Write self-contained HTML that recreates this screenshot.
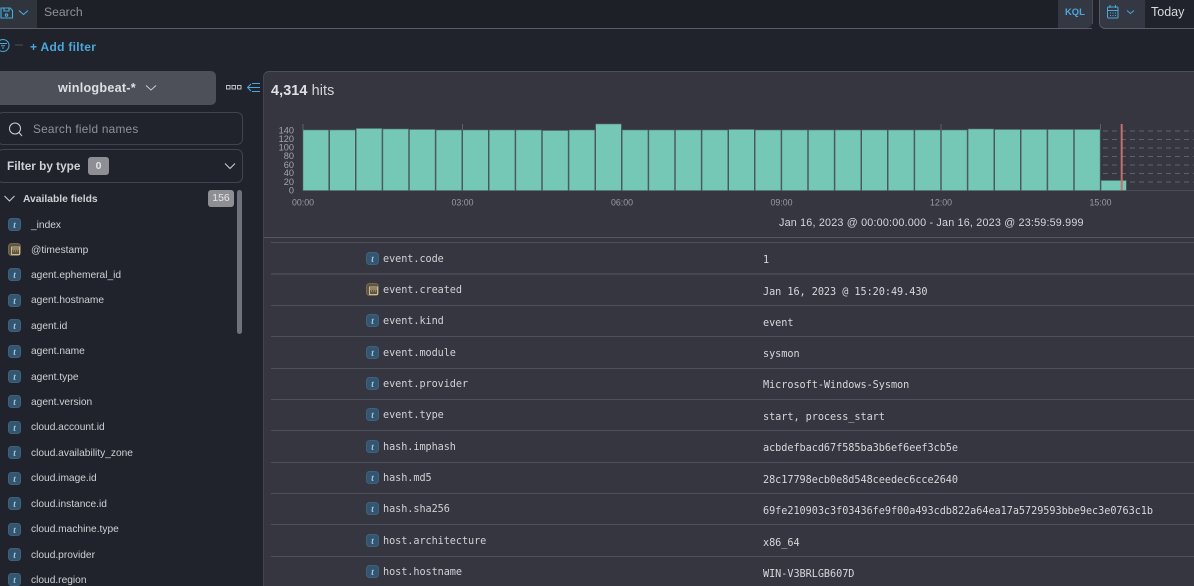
<!DOCTYPE html>
<html><head><meta charset="utf-8"><style>
html,body{margin:0;padding:0;width:1194px;height:586px;overflow:hidden;background:#20232b;font-family:"Liberation Sans",sans-serif;color:#d4d6da}
#w{position:absolute;left:0;top:0;width:1194px;height:586px;overflow:hidden;background:#20232b;filter:blur(.35px)}
.a{position:absolute;white-space:nowrap}
.ic{position:absolute;width:13px;height:13px;border-radius:3.500px;background:#335570;border:.5px solid #3f617c;box-sizing:border-box;color:#9ccbea;font:italic bold 9px/12px "Liberation Serif",serif;text-align:center}
.ic.d{background:#60553f;border-color:#75684e}
.ic.d svg{position:absolute;left:2px;top:2px}
.f{position:absolute;left:31px;margin-top:1px;font-size:10.200px;line-height:14px;color:#cfd1d6;white-space:nowrap}
.l{position:absolute;left:271px;right:0;height:1px;background:#4f505b}
.k{position:absolute;left:383px;margin-top:4px;font:10.2px/14px "DejaVu Sans Mono","Liberation Mono",monospace;letter-spacing:-.06px;color:#d0d2d6;white-space:nowrap}
.v{position:absolute;left:763px;margin-top:4px;font:10.2px/14px "DejaVu Sans Mono","Liberation Mono",monospace;letter-spacing:-.04px;color:#d6d8dc;white-space:nowrap}
</style></head><body><div id="w">
<!-- top bar -->
<div class="a" style="left:0;top:0;width:37px;height:28px;background:#2f343d"></div>
<div class="a" style="left:37px;top:0;width:1021px;height:28px;background:#1d2027"></div>
<div class="a" style="left:1058px;top:0;width:34px;height:28px;background:#343843;border-radius:0 0 5px 0"></div>
<div class="a" style="left:0;top:28px;width:1092px;height:1px;background:#5a5d65"></div>
<div class="a" style="left:1092px;top:0;width:1px;height:24px;background:#4a4d55"></div>
<div class="a" style="left:1099px;top:0;width:45px;height:28px;background:#343843;border-radius:0 0 0 6px;border-left:1px solid #55585f;border-bottom:1px solid #5a5d65;box-sizing:content-box"></div>
<div class="a" style="left:1145px;top:28px;width:49px;height:1px;background:#5a5d65"></div>
<svg class="a" style="left:0;top:0" width="32" height="22" viewBox="0 0 32 22" fill="none" stroke="#4aa8dc" stroke-width="1.1"><path d="M1 8h9l2.500 2.500V18H1zM4 8v3h5V8"/><circle cx="6.500" cy="15" r="1.200"/><path d="M19 10.500l4.500 4 4.500-4"/></svg>
<div class="a" style="left:44px;top:4px;font-size:12.200px;line-height:16px;color:#8f929a">Search</div>
<div class="a" style="left:1065px;top:5px;font-size:9.400px;line-height:13px;font-weight:bold;color:#4aa8dc">KQL</div>
<svg class="a" style="left:1106px;top:4px" width="34" height="16" viewBox="0 0 34 16" fill="none" stroke="#4aa8dc" stroke-width="1"><rect x="1.500" y="3" width="10.500" height="11" rx="1"/><path d="M1.500 6.500h10.500M4 1v3M9.500 1v3M4 9h1M6.500 9h1M9 9h1M4 11.500h1M6.500 11.500h1M9 11.500h1"/><path d="M21 6.500l3.500 3 3.500-3"/></svg>
<div class="a" style="left:1151px;top:4px;font-size:12.500px;line-height:16px;color:#d8dade">Today</div>
<!-- filter -->
<svg class="a" style="left:0;top:38px" width="26" height="16" viewBox="0 0 26 16" fill="none" stroke="#4aa8dc" stroke-width="1"><circle cx="3" cy="7.500" r="6"/><path d="M-1 5.500h8M1 7.700h4M2 10h2"/><path d="M15 7h8" stroke="#4d5058"/></svg>
<div class="a" style="left:30px;top:39px;font-size:12px;line-height:16px;font-weight:bold;color:#4aa8dc;letter-spacing:.3px">+ Add filter</div>
<!-- index pattern -->
<div class="a" style="left:0;top:71px;width:216px;height:34px;background:#4d5059;border-radius:0 5px 5px 0"></div>
<div class="a" style="left:58px;top:80px;font-size:12.600px;line-height:16px;font-weight:bold;color:#dfe0e3;letter-spacing:.25px">winlogbeat-*</div>
<svg class="a" style="left:144px;top:83px" width="14" height="10" viewBox="0 0 14 10" fill="none" stroke="#c9cbd0" stroke-width="1"><path d="M2 2.500l5 4.500 5-4.500"/></svg>
<svg class="a" style="left:225px;top:82px" width="36" height="12" viewBox="0 0 36 12" fill="none"><g stroke="#cfd1d6" stroke-width=".9"><rect x="1.500" y="3.500" width="3.500" height="3.500"/><rect x="7" y="3.500" width="3.500" height="3.500"/><rect x="12.500" y="3.500" width="3.500" height="3.500"/></g><path d="M26 2l-3.500 3.500 3.500 3.500M23 5.500h12M27 1.500h8M27 9.500h8" stroke="#4aa8dc" stroke-width="1"/></svg>
<!-- search -->
<div class="a" style="left:-3px;top:112px;width:246px;height:33px;box-sizing:border-box;border:1px solid #41444c;border-radius:6px"></div>
<svg class="a" style="left:7px;top:121px" width="18" height="17" viewBox="0 0 18 17" fill="none" stroke="#cfd1d6" stroke-width="1"><circle cx="8" cy="7.500" r="5.500"/><path d="M12 11.500l3 3.500"/></svg>
<div class="a" style="left:33px;top:122px;font-size:11.800px;line-height:15px;color:#8f929a;letter-spacing:.25px">Search field names</div>
<div class="a" style="left:-3px;top:149px;width:246px;height:34px;box-sizing:border-box;border:1px solid #41444c;border-radius:6px"></div>
<div class="a" style="left:7px;top:158px;font-size:11.800px;line-height:16px;font-weight:bold;color:#cfd1d6">Filter by type</div>
<div class="a" style="left:88px;top:157px;width:21px;height:18px;border-radius:3px;background:#8d8f94;color:#e3e4e6;font-size:10.500px;font-weight:bold;line-height:18px;text-align:center">0</div>
<svg class="a" style="left:222px;top:161px" width="16" height="11" viewBox="0 0 16 11" fill="none" stroke="#cfd1d6" stroke-width="1"><path d="M3 2.500l5 5 5-5"/></svg>
<!-- available -->
<svg class="a" style="left:3px;top:194px" width="13" height="10" viewBox="0 0 13 10" fill="none" stroke="#cfd1d6" stroke-width="1"><path d="M1.500 2l5 5 5-5"/></svg>
<div class="a" style="left:23px;top:193px;font-size:10.300px;line-height:14px;font-weight:bold;color:#cfd1d6">Available fields</div>
<div class="a" style="left:208px;top:190px;width:26px;height:17px;border-radius:3px;background:#8d8f94;color:#e3e4e6;font-size:10.500px;line-height:17px;text-align:center">156</div>
<div class="a" style="left:237px;top:190px;width:5px;height:144px;border-radius:3px;background:#6f727b"></div>
<!-- field list -->
<div class="ic" style="left:8px;top:218px">t</div><div class="f" style="top:218px">_index</div>
<div class="ic d" style="left:8px;top:243px"><svg width="9" height="9" viewBox="0 0 9 9" fill="none" stroke="#e0d0ac" stroke-width=".8"><rect x=".5" y="1" width="8" height="7.500"/><path d="M.5 3h8M2 5h1M4 5h1M6 5h1"/></svg></div><div class="f" style="top:243px">@timestamp</div>
<div class="ic" style="left:8px;top:268px">t</div><div class="f" style="top:268px">agent.ephemeral_id</div>
<div class="ic" style="left:8px;top:294px">t</div><div class="f" style="top:293px">agent.hostname</div>
<div class="ic" style="left:8px;top:319px">t</div><div class="f" style="top:319px">agent.id</div>
<div class="ic" style="left:8px;top:345px">t</div><div class="f" style="top:344px">agent.name</div>
<div class="ic" style="left:8px;top:370px">t</div><div class="f" style="top:370px">agent.type</div>
<div class="ic" style="left:8px;top:395px">t</div><div class="f" style="top:395px">agent.version</div>
<div class="ic" style="left:8px;top:421px">t</div><div class="f" style="top:420px">cloud.account.id</div>
<div class="ic" style="left:8px;top:446px">t</div><div class="f" style="top:446px">cloud.availability_zone</div>
<div class="ic" style="left:8px;top:472px">t</div><div class="f" style="top:471px">cloud.image.id</div>
<div class="ic" style="left:8px;top:497px">t</div><div class="f" style="top:497px">cloud.instance.id</div>
<div class="ic" style="left:8px;top:523px">t</div><div class="f" style="top:522px">cloud.machine.type</div>
<div class="ic" style="left:8px;top:548px">t</div><div class="f" style="top:548px">cloud.provider</div>
<div class="ic" style="left:8px;top:573px">t</div><div class="f" style="top:573px">cloud.region</div>
<!-- main panel -->
<div class="a" style="left:263px;top:71px;width:931px;height:515px;background:#353640;border-radius:6px 0 0 0;border-left:1px solid #44454f;border-top:1px solid #4d4e58;box-sizing:border-box"></div>
<div class="a" style="left:271px;top:82px;font-size:14.400px;line-height:18px;color:#d4d6da;letter-spacing:.1px"><b style="color:#e0e1e4">4,314</b> hits</div>
<!-- chart -->
<svg class="a" style="left:264px;top:110px" width="930" height="100" viewBox="264 110 930 100" font-family="Liberation Sans, sans-serif" font-size="9.200" fill="#a4a6ac">
<g text-anchor="end"><text x="294" y="133.500">140</text><text x="294" y="142">120</text><text x="294" y="150.500">100</text><text x="294" y="159">80</text><text x="294" y="168">60</text><text x="294" y="176">40</text><text x="294" y="185">20</text><text x="294" y="193.500">0</text></g>
<g stroke="#5d5f69" stroke-width="1"><path d="M303 124v6M462.500 124v6M941 124v6M1100.500 124v6"/></g>
<g stroke="#5f626c" stroke-width="1" stroke-dasharray="5 4"><path d="M1103 131h91M1103 139.500h91M1103 148h91M1103 156.500h91M1103 165h91M1103 173.500h91M1103 182h91"/></g>
<path d="M1127 190.500h67" stroke="#4a4c56"/>
<g fill="#76c8b6" stroke="#56706f" stroke-width=".6">
<rect x="303" y="130" width="25.600" height="60.500"/><rect x="329.700" y="130" width="25.600" height="60.500"/><rect x="356.300" y="128.500" width="25.600" height="62"/><rect x="382.900" y="129" width="25.600" height="61.500"/><rect x="409.500" y="129.500" width="25.600" height="61"/><rect x="436.100" y="130" width="25.600" height="60.500"/><rect x="462.700" y="130" width="25.600" height="60.500"/><rect x="489.300" y="130" width="25.600" height="60.500"/><rect x="515.900" y="130" width="25.600" height="60.500"/><rect x="542.500" y="130.500" width="25.600" height="60"/><rect x="569.100" y="130" width="25.600" height="60.500"/><rect x="595.700" y="124" width="25.600" height="66.500"/><rect x="622.300" y="130" width="25.600" height="60.500"/><rect x="648.900" y="130" width="25.600" height="60.500"/><rect x="675.500" y="130" width="25.600" height="60.500"/><rect x="702.100" y="130" width="25.600" height="60.500"/><rect x="728.700" y="129.500" width="25.600" height="61"/><rect x="755.300" y="130" width="25.600" height="60.500"/><rect x="781.900" y="130" width="25.600" height="60.500"/><rect x="808.500" y="130" width="25.600" height="60.500"/><rect x="835.100" y="130" width="25.600" height="60.500"/><rect x="861.700" y="130" width="25.600" height="60.500"/><rect x="888.300" y="130" width="25.600" height="60.500"/><rect x="914.900" y="130" width="25.600" height="60.500"/><rect x="941.500" y="130" width="25.600" height="60.500"/><rect x="968.100" y="129" width="25.600" height="61.500"/><rect x="994.700" y="129.500" width="25.600" height="61"/><rect x="1021.300" y="129.500" width="25.600" height="61"/><rect x="1047.900" y="129.500" width="25.600" height="61"/><rect x="1074.500" y="129.500" width="25.600" height="61"/><rect x="1101.100" y="180.500" width="25.200" height="10"/>
</g>
<rect x="1120.700" y="124" width="2" height="66.500" fill="#c46f6c"/>
<g text-anchor="middle" fill="#9a9ca3" font-size="8.800"><text x="303" y="205.500">00:00</text><text x="462.500" y="205.500">03:00</text><text x="622" y="205.500">06:00</text><text x="781.500" y="205.500">09:00</text><text x="941" y="205.500">12:00</text><text x="1100.500" y="205.500">15:00</text></g>
</svg>
<div class="a" style="left:779px;top:216px;font-size:10.800px;line-height:14px;color:#d4d6da;letter-spacing:.18px">Jan 16, 2023 @ 00:00:00.000 - Jan 16, 2023 @ 23:59:59.999</div>
<div class="a" style="left:264px;top:237px;right:0;height:1px;background:#565761"></div>
<!-- table -->
<div class="l" style="top:242px"></div>
<div class="l" style="top:273px;height:2px;background:#454650"></div>
<div class="l" style="top:305px"></div><div class="l" style="top:336px"></div><div class="l" style="top:368px"></div><div class="l" style="top:399px"></div><div class="l" style="top:430px"></div><div class="l" style="top:462px"></div><div class="l" style="top:493px"></div><div class="l" style="top:524px"></div><div class="l" style="top:556px"></div>
<div class="ic" style="left:366px;top:252px">t</div><div class="k" style="top:249px">event.code</div><div class="v" style="top:250px">1</div>
<div class="ic d" style="left:366px;top:283px"><svg width="9" height="9" viewBox="0 0 9 9" fill="none" stroke="#e0d0ac" stroke-width=".8"><rect x=".5" y="1" width="8" height="7.500"/><path d="M.5 3h8M2 5h1M4 5h1M6 5h1"/></svg></div><div class="k" style="top:280px">event.created</div><div class="v" style="top:282px">Jan 16, 2023 @ 15:20:49.430</div>
<div class="ic" style="left:366px;top:314px">t</div><div class="k" style="top:311px">event.kind</div><div class="v" style="top:313px">event</div>
<div class="ic" style="left:366px;top:346px">t</div><div class="k" style="top:343px">event.module</div><div class="v" style="top:344px">sysmon</div>
<div class="ic" style="left:366px;top:377px">t</div><div class="k" style="top:374px">event.provider</div><div class="v" style="top:375px">Microsoft-Windows-Sysmon</div>
<div class="ic" style="left:366px;top:408px">t</div><div class="k" style="top:405px">event.type</div><div class="v" style="top:407px">start, process_start</div>
<div class="ic" style="left:366px;top:440px">t</div><div class="k" style="top:437px">hash.imphash</div><div class="v" style="top:438px">acbdefbacd67f585ba3b6ef6eef3cb5e</div>
<div class="ic" style="left:366px;top:471px">t</div><div class="k" style="top:468px">hash.md5</div><div class="v" style="top:470px">28c17798ecb0e8d548ceedec6cce2640</div>
<div class="ic" style="left:366px;top:502px">t</div><div class="k" style="top:499px">hash.sha256</div><div class="v" style="top:501px">69fe210903c3f03436fe9f00a493cdb822a64ea17a5729593bbe9ec3e0763c1b</div>
<div class="ic" style="left:366px;top:534px">t</div><div class="k" style="top:531px">host.architecture</div><div class="v" style="top:533px">x86_64</div>
<div class="ic" style="left:366px;top:565px">t</div><div class="k" style="top:562px">host.hostname</div><div class="v" style="top:564px">WIN-V3BRLGB607D</div>
</div></body></html>
